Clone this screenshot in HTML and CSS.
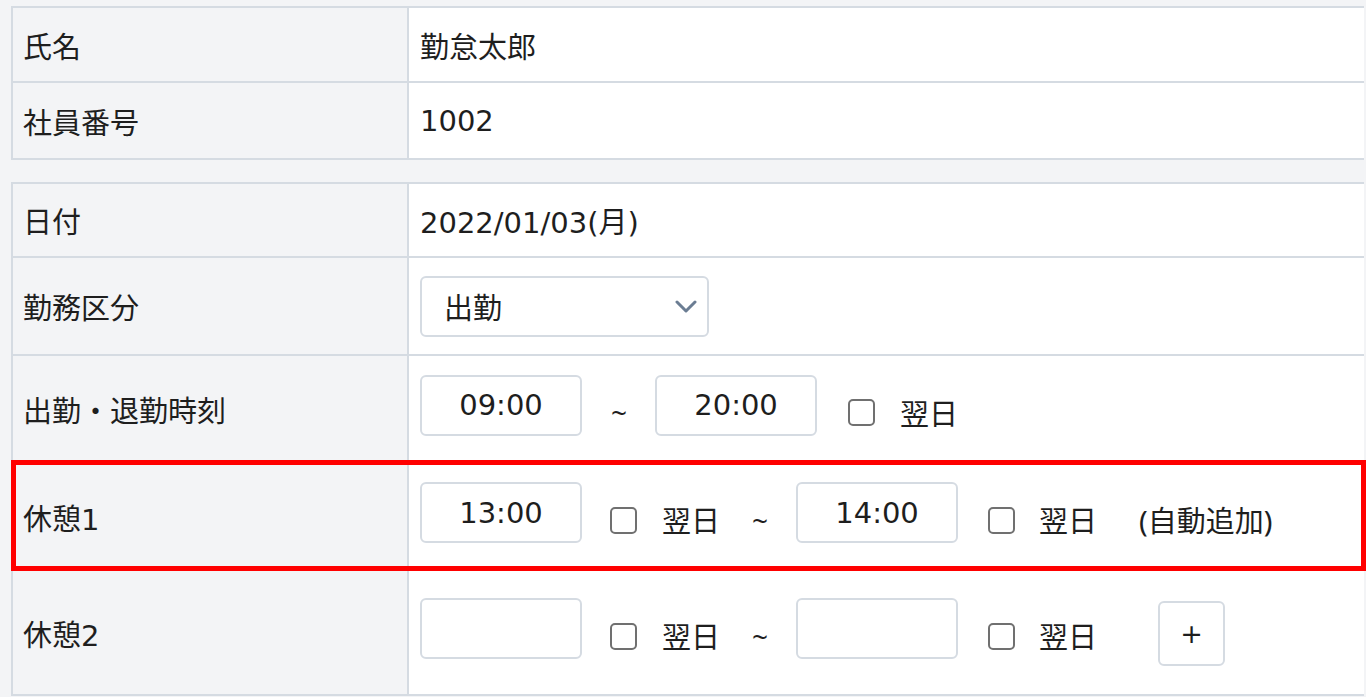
FILE: index.html
```html
<!DOCTYPE html>
<html lang="ja">
  <head>
    <meta charset="utf-8">
    <title>勤怠修正</title>
    <link rel="stylesheet" href="styles.css">
  </head>
  <body>
    <div class="page">

      <!-- employee -->
      <div class="sheet">
        <div class="row row_name">
          <div class="row_label">氏名</div>
          <div class="row_value">勤怠太郎</div>
        </div>
        <div class="row row_id">
          <div class="row_label">社員番号</div>
          <div class="row_value">1002</div>
        </div>
      </div>

      <!-- day record -->
      <div class="sheet sheet_gap">
        <div class="row row_date">
          <div class="row_label">日付</div>
          <div class="row_value">2022/01/03(月)</div>
        </div>

        <div class="row row_kind">
          <div class="row_label">勤務区分</div>
          <div class="row_value">
            <div class="select">
              <span>出勤</span>
              <svg width="22" height="13" viewBox="0 0 22 13"><path d="M2 2 L11 11 L20 2" fill="none" stroke="#6b7d93" stroke-width="3" stroke-linecap="round" stroke-linejoin="round"/></svg>
            </div>
          </div>
        </div>

        <div class="row row_work">
          <div class="row_label">出勤・退勤時刻</div>
          <div class="row_value">
            <input class="time" type="text" value="09:00">
            <span class="tilde tilde_work">~</span>
            <input class="time" type="text" value="20:00">
            <label class="next next_work"><input class="check" type="checkbox"><span>翌日</span></label>
          </div>
        </div>

        <div class="row row_break marked">
          <div class="row_label">休憩1</div>
          <div class="row_value">
            <input class="time" type="text" value="13:00">
            <label class="next"><input class="check" type="checkbox"><span>翌日</span></label>
            <span class="tilde">~</span>
            <input class="time" type="text" value="14:00">
            <label class="next next_end"><input class="check" type="checkbox"><span>翌日</span></label>
            <span class="note">(自動追加)</span>
          </div>
        </div>

        <div class="row row_break2">
          <div class="row_label">休憩2</div>
          <div class="row_value">
            <input class="time" type="text" value="">
            <label class="next"><input class="check" type="checkbox"><span>翌日</span></label>
            <span class="tilde">~</span>
            <input class="time" type="text" value="">
            <label class="next next_end"><input class="check" type="checkbox"><span>翌日</span></label>
            <button class="add" type="button">+</button>
          </div>
        </div>
      </div>

    </div>
  </body>
</html>
```

FILE: styles.css
```css
html, body
{
  margin: 0;
  background: #f3f4f6;
  overflow: hidden;
}
body
{
  font-family: "DejaVu Sans", "Noto Sans CJK JP", sans-serif;
  font-size: 29px;
  color: #1e1e1e;
}
.page
{
  padding: 6px 0 0 11px;
}

.sheet
{
  width: 1351px;
  border: 2px solid #d5dbe2;
  border-right: 0;
  background: #fff;
}
.sheet_gap
{
  margin-top: 22px;
}

.row
{
  display: grid;
  grid-template-columns: 396px 1fr;
}
.row + .row
{
  border-top: 2px solid #d5dbe2;
}
.row_label
{
  background: #f3f4f6;
  border-right: 2px solid #d5dbe2;
  padding-left: 10px;
  display: flex;
  align-items: center;
}
.row_value
{
  padding-left: 11px;
  display: flex;
  align-items: center;
}

/* row heights */
.row_name { height: 73px; }
.row_id { height: 75px; }
.row_date { height: 72px; }
.row_kind { height: 96px; }
.row_work { height: 106px; }
.row_break { height: 105px; }
.row_break2 { height: 123px; }

.marked
{
  position: relative;
  z-index: 1;
  outline: 5px solid #ff0000;
  outline-offset: -3px;
}

/* controls */
.select
{
  box-sizing: border-box;
  width: 289px;
  height: 61px;
  border: 2px solid #d5dbe2;
  border-radius: 6px;
  padding: 0 10px 0 22px;
  display: flex;
  align-items: center;
  justify-content: space-between;
}
.time
{
  box-sizing: border-box;
  width: 162px;
  height: 61px;
  margin: 0 0 8px 0;
  border: 2px solid #d5dbe2;
  border-radius: 6px;
  background: #fff;
  font: inherit;
  color: inherit;
  text-align: center;
  padding: 0;
}
.tilde
{
  font-family: "Noto Sans", sans-serif;
  font-size: 28px;
  margin: 6px 28px 0 32px;
}
.tilde_work
{
  margin-left: 29px;
}
.next
{
  display: flex;
  align-items: center;
  margin: 7px 0 0 28px;
}
.next_work
{
  margin-left: 31px;
}
.next_end
{
  margin-left: 30px;
}
.next span
{
  margin-left: 25px;
  position: relative;
  top: -1px;
}
.next_end span
{
  margin-left: 24px;
}
.check
{
  appearance: none;
  box-sizing: border-box;
  width: 27px;
  height: 27px;
  margin: 0;
  border: 2px solid #707070;
  border-radius: 5px;
  background: #fff;
}
.note
{
  font-family: "Noto Sans", "Noto Sans CJK JP", sans-serif;
  margin: 5px 0 0 42px;
}
.add
{
  box-sizing: border-box;
  width: 67px;
  height: 65px;
  margin: 2px 0 0 61px;
  border: 2px solid #d5dbe2;
  border-radius: 6px;
  background: #fff;
  font: 27px "DejaVu Sans", sans-serif;
  color: inherit;
  padding: 0;
}
```
